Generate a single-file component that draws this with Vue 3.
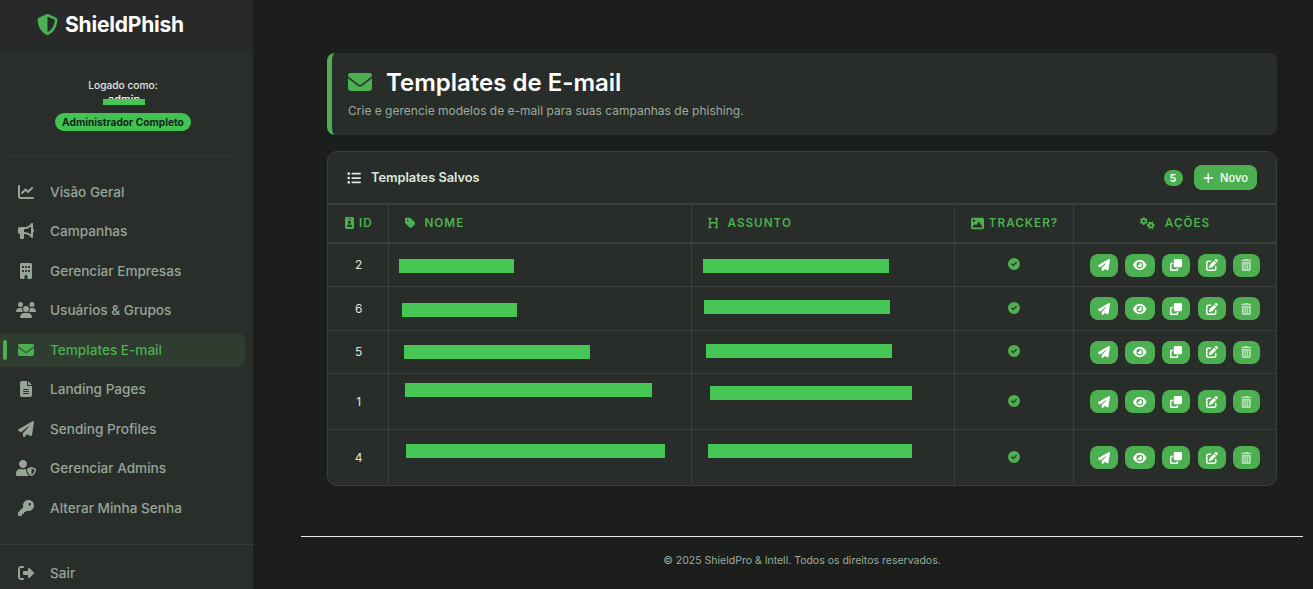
<script setup>
import { h } from 'vue'

const paths = {
  envelope: [512, 'M48 64C21.5 64 0 85.5 0 112c0 15.1 7.1 29.3 19.2 38.4L236.8 313.6c11.4 8.5 27 8.5 38.4 0L492.8 150.4c12.1-9.1 19.2-23.3 19.2-38.4c0-26.5-21.5-48-48-48H48zM0 176V384c0 35.3 28.7 64 64 64H448c35.3 0 64-28.7 64-64V176L294.4 339.2c-22.8 17.1-54 17.1-76.8 0L0 176z'],
  chart: [512, 'M64 64c0-17.7-14.3-32-32-32S0 46.3 0 64V400c0 44.2 35.8 80 80 80H480c17.7 0 32-14.3 32-32s-14.3-32-32-32H80c-8.8 0-16-7.2-16-16V64zm406.6 86.6c12.5-12.5 12.5-32.8 0-45.3s-32.8-12.5-45.3 0L320 210.7l-57.4-57.4c-12.5-12.5-32.8-12.5-45.3 0l-112 112c-12.5 12.5-12.5 32.8 0 45.3s32.8 12.5 45.3 0L240 221.3l57.4 57.4c12.5 12.5 32.8 12.5 45.3 0l128-128z'],
  bullhorn: [512, 'M480 32c0-12.9-7.8-24.6-19.8-29.6s-25.7-2.2-34.9 6.9L381.7 53c-48 48-113.1 75-181 75H192 160 64c-35.3 0-64 28.7-64 64v96c0 35.3 28.7 64 64 64l0 128c0 17.7 14.3 32 32 32h64c17.7 0 32-14.3 32-32V352l8.7 0c67.9 0 133 27 181 75l43.6 43.6c9.2 9.2 22.9 11.9 34.9 6.9s19.8-16.6 19.8-29.6V300.4c18.6-8.8 32-32.5 32-60.4s-13.4-51.6-32-60.4V32zm-64 76.7V240 371.3C357.2 317.8 280.5 288 200.7 288H192V192h8.7c79.8 0 156.5-29.8 215.3-83.3z'],
  building: [384, 'M48 0C21.5 0 0 21.5 0 48V464c0 26.5 21.5 48 48 48h96V432c0-26.5 21.5-48 48-48s48 21.5 48 48v80h96c26.5 0 48-21.5 48-48V48c0-26.5-21.5-48-48-48H48zM64 240c0-8.8 7.2-16 16-16h32c8.8 0 16 7.2 16 16v32c0 8.8-7.2 16-16 16H80c-8.8 0-16-7.2-16-16V240zm112-16h32c8.8 0 16 7.2 16 16v32c0 8.8-7.2 16-16 16H176c-8.8 0-16-7.2-16-16V240c0-8.8 7.2-16 16-16zm80 16c0-8.8 7.2-16 16-16h32c8.8 0 16 7.2 16 16v32c0 8.8-7.2 16-16 16H272c-8.8 0-16-7.2-16-16V240zM80 96h32c8.8 0 16 7.2 16 16v32c0 8.8-7.2 16-16 16H80c-8.8 0-16-7.2-16-16V112c0-8.8 7.2-16 16-16zm80 16c0-8.8 7.2-16 16-16h32c8.8 0 16 7.2 16 16v32c0 8.8-7.2 16-16 16H176c-8.8 0-16-7.2-16-16V112zM272 96h32c8.8 0 16 7.2 16 16v32c0 8.8-7.2 16-16 16H272c-8.8 0-16-7.2-16-16V112c0-8.8 7.2-16 16-16z'],
  users: [640, 'M144 0a80 80 0 1 1 0 160A80 80 0 1 1 144 0zM512 0a80 80 0 1 1 0 160A80 80 0 1 1 512 0zM0 298.7C0 239.8 47.8 192 106.7 192h42.7c15.9 0 31 3.5 44.6 9.7c-1.3 7.2-1.9 14.7-1.9 22.3c0 38.2 16.8 72.5 43.3 96c-.2 0-.4 0-.7 0H21.3C9.6 320 0 310.4 0 298.7zM405.3 320c-.2 0-.4 0-.7 0c26.6-23.5 43.3-57.8 43.3-96c0-7.6-.7-15-1.9-22.3c13.6-6.3 28.7-9.7 44.6-9.7h42.7C592.2 192 640 239.8 640 298.7c0 11.8-9.6 21.3-21.3 21.3H405.3zM224 224a96 96 0 1 1 192 0 96 96 0 1 1 -192 0zM128 485.3C128 411.7 187.7 352 261.3 352H378.7C452.3 352 512 411.7 512 485.3c0 14.7-11.9 26.7-26.7 26.7H154.7c-14.7 0-26.7-11.9-26.7-26.7z'],
  file: [384, 'M64 0C28.7 0 0 28.7 0 64V448c0 35.3 28.7 64 64 64H320c35.3 0 64-28.7 64-64V160H256c-17.7 0-32-14.3-32-32V0H64zM256 0V128H384L256 0zM112 256H272c8.8 0 16 7.2 16 16s-7.2 16-16 16H112c-8.8 0-16-7.2-16-16s7.2-16 16-16zm0 64H272c8.8 0 16 7.2 16 16s-7.2 16-16 16H112c-8.8 0-16-7.2-16-16s7.2-16 16-16zm0 64H272c8.8 0 16 7.2 16 16s-7.2 16-16 16H112c-8.8 0-16-7.2-16-16s7.2-16 16-16z'],
  plane: [512, 'M498.1 5.6c10.1 7 15.4 19.1 13.5 31.2l-64 416c-1.5 9.7-7.4 18.2-16 23s-18.9 5.4-28 1.6L284 427.7l-68.5 74.1c-8.9 9.7-22.9 12.9-35.2 8.1S160 493.2 160 480V396.4c0-4 1.5-7.8 4.2-10.7L331.8 202.8c5.8-6.3 5.6-16-.4-22s-15.7-6.4-22-.7L106 360.8 17.7 316.6C7.1 311.3 .3 300.7 0 288.9s5.9-22.8 16.1-28.7l448-256c10.7-6.1 23.9-5.5 34 1.4z'],
  usershield: [640, 'M622.3 271.1l-115.2-45c-4.1-1.6-12.6-3.7-22.2 0l-115.2 45c-10.7 4.2-17.7 14-17.7 24.9 0 111.6 68.7 188.8 132.9 213.9 9.6 3.7 18 1.6 22.2 0C558.4 489.9 640 420.5 640 296c0-10.9-7-20.7-17.7-24.9zM496 462.4V273.3l95.5 37.3c-5.6 87.1-60.9 135.4-95.5 151.8zM224 256c70.7 0 128-57.3 128-128S294.7 0 224 0 96 57.3 96 128s57.3 128 128 128zm96 40c0-2.5.8-4.8 1.1-7.2-2.5-.1-4.9-.8-7.5-.8h-16.7c-22.2 10.2-46.9 16-72.9 16s-50.6-5.8-72.9-16h-16.7C60.2 288 0 348.2 0 422.4V464c0 26.5 21.5 48 48 48h352c6.8 0 13.3-1.5 19.2-4-54-42.9-99.2-116.7-99.2-212z'],
  key: [512, 'M336 352c97.2 0 176-78.8 176-176S433.2 0 336 0S160 78.8 160 176c0 18.7 2.9 36.8 8.3 53.7L7 391c-4.5 4.5-7 10.6-7 17v80c0 13.3 10.7 24 24 24h80c13.3 0 24-10.7 24-24V448h40c13.3 0 24-10.7 24-24V384h40c6.4 0 12.5-2.5 17-7l33.3-33.3c16.9 5.4 35 8.3 53.7 8.3zM376 96a40 40 0 1 1 0 80 40 40 0 1 1 0-80z'],
  signout: [512, 'M377.9 105.9L500.7 228.7c7.2 7.2 11.3 17.1 11.3 27.3s-4.1 20.1-11.3 27.3L377.9 406.1c-6.4 6.4-15 9.9-24 9.9c-18.7 0-33.9-15.2-33.9-33.9l0-62.1-128 0c-17.7 0-32-14.3-32-32l0-64c0-17.7 14.3-32 32-32l128 0 0-62.1c0-18.7 15.2-33.9 33.9-33.9c9 0 17.6 3.6 24 9.9zM160 96L96 96c-17.7 0-32 14.3-32 32l0 256c0 17.7 14.3 32 32 32l64 0c17.7 0 32 14.3 32 32s-14.3 32-32 32l-64 0c-53 0-96-43-96-96L0 128C0 75 43 32 96 32l64 0c17.7 0 32 14.3 32 32s-14.3 32-32 32z'],
  shield: [512, 'M256 0c4.6 0 9.2 1 13.4 2.9L457.7 82.8c22 9.3 38.4 31 38.3 57.2c-.5 99.2-41.3 280.7-213.6 363.2c-16.7 8-36.1 8-52.8 0C57.3 420.7 16.5 239.2 16 140c-.1-26.2 16.3-47.9 38.3-57.2L242.7 2.9C246.8 1 251.4 0 256 0zm0 66.8V444.8C394 378 431.1 230.1 432 141.4L256 66.8l0 0z'],
  list: [512, 'M64 144a48 48 0 1 0 0-96 48 48 0 1 0 0 96zM192 64c-17.7 0-32 14.3-32 32s14.3 32 32 32H480c17.7 0 32-14.3 32-32s-14.3-32-32-32H192zm0 160c-17.7 0-32 14.3-32 32s14.3 32 32 32H480c17.7 0 32-14.3 32-32s-14.3-32-32-32H192zm0 160c-17.7 0-32 14.3-32 32s14.3 32 32 32H480c17.7 0 32-14.3 32-32s-14.3-32-32-32H192zM64 464a48 48 0 1 0 0-96 48 48 0 1 0 0 96zm48-208a48 48 0 1 0 -96 0 48 48 0 1 0 96 0z'],
  plus: [448, 'M256 80c0-17.7-14.3-32-32-32s-32 14.3-32 32V224H48c-17.7 0-32 14.3-32 32s14.3 32 32 32H192V432c0 17.7 14.3 32 32 32s32-14.3 32-32V288H400c17.7 0 32-14.3 32-32s-14.3-32-32-32H256V80z'],
  idbadge: [384, 'M64 0C28.7 0 0 28.7 0 64V448c0 35.3 28.7 64 64 64H320c35.3 0 64-28.7 64-64V64c0-35.3-28.7-64-64-64H64zm96 320h64c44.2 0 80 35.8 80 80c0 8.8-7.2 16-16 16H96c-8.8 0-16-7.2-16-16c0-44.2 35.8-80 80-80zm-32-96a64 64 0 1 1 128 0 64 64 0 1 1 -128 0zM144 64h96c8.8 0 16 7.2 16 16s-7.2 16-16 16H144c-8.8 0-16-7.2-16-16s7.2-16 16-16z'],
  tag: [448, 'M0 80V229.5c0 17 6.7 33.3 18.7 45.3l176 176c25 25 65.5 25 90.5 0L418.7 317.3c25-25 25-65.5 0-90.5l-176-176c-12-12-28.3-18.7-45.3-18.7H48C21.5 32 0 53.5 0 80zm112 32a32 32 0 1 1 0 64 32 32 0 1 1 0-64z'],
  heading: [448, 'M0 64C0 46.3 14.3 32 32 32H80h48c17.7 0 32 14.3 32 32s-14.3 32-32 32H112V208H336V96H320c-17.7 0-32-14.3-32-32s14.3-32 32-32h48 48c17.7 0 32 14.3 32 32s-14.3 32-32 32H400V240 416h16c17.7 0 32 14.3 32 32s-14.3 32-32 32H368 320c-17.7 0-32-14.3-32-32s14.3-32 32-32h16V272H112V416h16c17.7 0 32 14.3 32 32s-14.3 32-32 32H80 32c-17.7 0-32-14.3-32-32s14.3-32 32-32H48V240 96H32C14.3 96 0 81.7 0 64z'],
  image: [512, 'M0 96C0 60.7 28.7 32 64 32H448c35.3 0 64 28.7 64 64V416c0 35.3-28.7 64-64 64H64c-35.3 0-64-28.7-64-64V96zM323.8 202.5c-4.5-6.6-11.9-10.5-19.8-10.5s-15.4 3.9-19.8 10.5l-87 127.6L170.7 297c-4.6-5.7-11.5-9-18.7-9s-14.2 3.3-18.7 9l-64 80c-5.8 7.2-6.9 17.1-2.9 25.4s12.4 13.6 21.6 13.6h96 32H424c8.9 0 17.1-4.9 21.2-12.8s3.6-17.4-1.4-24.7l-120-176zM112 192a48 48 0 1 0 0-96 48 48 0 1 0 0 96z'],
  check: [512, 'M256 512A256 256 0 1 0 256 0a256 256 0 1 0 0 512zM369 209L241 337c-9.4 9.4-24.6 9.4-33.9 0l-64-64c-9.4-9.4-9.4-24.6 0-33.9s24.6-9.4 33.9 0l47 47L335 175c9.4-9.4 24.6-9.4 33.9 0s9.4 24.6 0 33.9z'],
  eye: [576, 'M288 32c-80.8 0-145.5 36.8-192.6 80.6C48.6 156 17.3 208 2.5 243.7c-3.3 7.9-3.3 16.7 0 24.6C17.3 304 48.6 356 95.4 399.4C142.5 443.2 207.2 480 288 480s145.5-36.8 192.6-80.6c46.8-43.5 78.1-95.4 93-131.1c3.3-7.9 3.3-16.7 0-24.6c-14.9-35.7-46.2-87.7-93-131.1C433.5 68.8 368.8 32 288 32zM144 256a144 144 0 1 1 288 0 144 144 0 1 1 -288 0zm144-64c0 35.3-28.7 64-64 64c-7.1 0-13.9-1.2-20.3-3.3c-5.5-1.8-11.9 1.6-11.7 7.4c.3 6.9 1.3 13.8 3.2 20.7c13.7 51.2 66.4 81.6 117.6 67.9s81.6-66.4 67.9-117.6c-11.1-41.5-47.8-69.4-88.6-71.1c-5.8-.2-9.2 6.1-7.4 11.7c2.1 6.4 3.3 13.2 3.3 20.3z'],
  clone: [512, 'M288 448H64V224h64V160H64c-35.3 0-64 28.7-64 64V448c0 35.3 28.7 64 64 64H288c35.3 0 64-28.7 64-64V384H288v64zm-64-96H448c35.3 0 64-28.7 64-64V64c0-35.3-28.7-64-64-64H224c-35.3 0-64 28.7-64 64V288c0 35.3 28.7 64 64 64z'],
  edit: [512, 'M471.6 21.7c-21.9-21.9-57.3-21.9-79.2 0L362.3 51.7l97.9 97.9 30.1-30.1c21.9-21.9 21.9-57.3 0-79.2L471.6 21.7zm-299.2 220c-6.1 6.1-10.8 13.6-13.5 21.9l-29.6 88.8c-2.9 8.6-.6 18.1 5.8 24.6s15.9 8.7 24.6 5.8l88.8-29.6c8.2-2.7 15.7-7.4 21.9-13.5L437.7 172.3 339.7 74.3 172.4 241.7zM96 64C43 64 0 107 0 160V416c0 53 43 96 96 96H352c53 0 96-43 96-96V320c0-17.7-14.3-32-32-32s-32 14.3-32 32v96c0 17.7-14.3 32-32 32H96c-17.7 0-32-14.3-32-32V160c0-17.7 14.3-32 32-32h96c17.7 0 32-14.3 32-32s-14.3-32-32-32H96z'],
  trash: [448, 'M135.2 17.7C140.6 6.8 151.7 0 163.8 0H284.2c12.1 0 23.2 6.8 28.6 17.7L320 32h96c17.7 0 32 14.3 32 32s-14.3 32-32 32H32C14.3 96 0 81.7 0 64S14.3 32 32 32h96l7.2-14.3zM32 128H416V448c0 35.3-28.7 64-64 64H96c-35.3 0-64-28.7-64-64V128zm96 64c-8.8 0-16 7.2-16 16V432c0 8.8 7.2 16 16 16s16-7.2 16-16V208c0-8.8-7.2-16-16-16zm96 0c-8.8 0-16 7.2-16 16V432c0 8.8 7.2 16 16 16s16-7.2 16-16V208c0-8.8-7.2-16-16-16zm96 0c-8.8 0-16 7.2-16 16V432c0 8.8 7.2 16 16 16s16-7.2 16-16V208c0-8.8-7.2-16-16-16z'],
  gears: [640, 'M308.5 135.3c7.1-6.3 9.9-16.2 6.2-25c-2.3-5.3-4.8-10.5-7.6-15.5L304 89.4c-3-5-6.3-9.9-9.8-14.6c-5.7-7.6-15.7-10.1-24.7-7.1l-28.2 9.3c-10.7-8.8-23-16-36.2-20.9L199 27.1c-1.9-9.3-9.1-16.7-18.5-17.8C173.9 8.4 167.2 8 160.4 8h-.7c-6.8 0-13.5 .4-20.1 1.2c-9.4 1.1-16.6 8.6-18.5 17.8L115 56.1c-13.3 5-25.5 12.1-36.2 20.9L50.5 67.8c-9-3-19-.5-24.7 7.1c-3.5 4.7-6.8 9.6-9.9 14.6l-3 5.3c-2.8 5-5.3 10.2-7.6 15.6c-3.7 8.7-.9 18.6 6.2 25l22.2 19.8C32.6 161.9 32 168.9 32 176s.6 14.1 1.7 20.9L11.5 216.7c-7.1 6.3-9.9 16.2-6.2 25c2.3 5.3 4.8 10.5 7.6 15.6l3 5.2c3 5.1 6.3 9.9 9.9 14.6c5.7 7.6 15.7 10.1 24.7 7.1l28.2-9.3c10.7 8.8 23 16 36.2 20.9l6.1 29.1c1.9 9.3 9.1 16.7 18.5 17.8c6.7 .8 13.5 1.2 20.4 1.2s13.7-.4 20.4-1.2c9.4-1.1 16.6-8.6 18.5-17.8l6.1-29.1c13.3-5 25.5-12.1 36.2-20.9l28.2 9.3c9 3 19 .5 24.7-7.1c3.5-4.7 6.8-9.5 9.8-14.6l3.1-5.4c2.8-5 5.3-10.2 7.6-15.5c3.7-8.7 .9-18.6-6.2-25l-22.2-19.8c1.1-6.8 1.7-13.8 1.7-20.9s-.6-14.1-1.7-20.9l22.2-19.8zM112 176a48 48 0 1 1 96 0 48 48 0 1 1 -96 0zM504.7 500.5c6.3 7.1 16.2 9.9 25 6.2c5.3-2.3 10.5-4.8 15.5-7.6l5.4-3.1c5-3 9.9-6.3 14.6-9.8c7.6-5.7 10.1-15.7 7.1-24.7l-9.3-28.2c8.8-10.7 16-23 20.9-36.2l29.1-6.1c9.3-1.9 16.7-9.1 17.8-18.5c.8-6.7 1.2-13.5 1.2-20.4s-.4-13.7-1.2-20.4c-1.1-9.4-8.6-16.6-17.8-18.5L583.9 307c-5-13.3-12.1-25.5-20.9-36.2l9.3-28.2c3-9 .5-19-7.1-24.7c-4.7-3.5-9.6-6.8-14.6-9.9l-5.3-3c-5-2.8-10.2-5.3-15.6-7.6c-8.7-3.7-18.6-.9-25 6.2l-19.8 22.2c-6.8-1.1-13.8-1.7-20.9-1.7s-14.1 .6-20.9 1.7l-19.8-22.2c-6.3-7.1-16.2-9.9-25-6.2c-5.3 2.3-10.5 4.8-15.6 7.6l-5.2 3c-5.1 3-9.9 6.3-14.6 9.9c-7.6 5.7-10.1 15.7-7.1 24.7l9.3 28.2c-8.8 10.7-16 23-20.9 36.2L315.1 313c-9.3 1.9-16.7 9.1-17.8 18.5c-.8 6.7-1.2 13.5-1.2 20.4s.4 13.7 1.2 20.4c1.1 9.4 8.6 16.6 17.8 18.5l29.1 6.1c5 13.3 12.1 25.5 20.9 36.2l-9.3 28.2c-3 9-.5 19 7.1 24.7c4.7 3.5 9.5 6.8 14.6 9.8l5.4 3.1c5 2.8 10.2 5.3 15.5 7.6c8.7 3.7 18.6 .9 25-6.2l19.8-22.2c6.8 1.1 13.8 1.7 20.9 1.7s14.1-.6 20.9-1.7l19.8 22.2zM464 304a48 48 0 1 1 0 96 48 48 0 1 1 0-96z']
}

const Icon = (props) => {
  const [w, d] = paths[props.name]
  return h('svg', { viewBox: `0 0 ${w} 512`, width: (w / 512) * props.size, height: props.size, fill: 'currentColor', style: { flex: 'none', display: 'block' } }, h('path', { d }))
}
Icon.props = ['name', 'size']

const nav = [
  { icon: 'chart', label: 'Visão Geral' },
  { icon: 'bullhorn', label: 'Campanhas' },
  { icon: 'building', label: 'Gerenciar Empresas' },
  { icon: 'users', label: 'Usuários & Grupos' },
  { icon: 'envelope', label: 'Templates E-mail', active: true },
  { icon: 'file', label: 'Landing Pages' },
  { icon: 'plane', label: 'Sending Profiles' },
  { icon: 'usershield', label: 'Gerenciar Admins' },
  { icon: 'key', label: 'Alterar Minha Senha' }
]

const actions = ['plane', 'eye', 'clone', 'edit', 'trash']

const rows = [
  { id: 2, h: 43, name: { l: 10, t: 15, w: 115 }, subj: { l: 11, t: 15, w: 186 } },
  { id: 6, h: 44, name: { l: 13, t: 16, w: 115 }, subj: { l: 12, t: 13, w: 186 } },
  { id: 5, h: 43, name: { l: 15, t: 14, w: 186 }, subj: { l: 14, t: 13, w: 186 } },
  { id: 1, h: 56, name: { l: 16, t: 9, w: 247 }, subj: { l: 18, t: 12, w: 202 } },
  { id: 4, h: 56, name: { l: 17, t: 14, w: 259 }, subj: { l: 16, t: 14, w: 204 } }
]
const bar = (b) => ({ left: b.l + 'px', top: b.t + 'px', width: b.w + 'px' })
</script>

<template>
  <div class="app">
    <aside class="sidebar">
      <div class="brand">
        <Icon name="shield" :size="21" class="brand-icon" />
        <span>ShieldPhish</span>
      </div>
      <div class="user">
        <div class="user-label">Logado como:</div>
        <div class="user-name">admin<i class="user-bar"></i></div>
        <div class="pill">Administrador Completo</div>
      </div>
      <nav class="nav">
        <a v-for="n in nav" :key="n.label" class="nav-item" :class="{ active: n.active }">
          <span class="nav-icon"><Icon :name="n.icon" :size="16" /></span>
          <span>{{ n.label }}</span>
        </a>
      </nav>
      <div class="logout">
        <a class="nav-item">
          <span class="nav-icon"><Icon name="signout" :size="16" /></span>
          <span>Sair</span>
        </a>
      </div>
    </aside>

    <main class="main">
      <div class="content">
        <header class="page-head">
          <h1><Icon name="envelope" :size="24" class="head-icon" />Templates de E-mail</h1>
          <p>Crie e gerencie modelos de e-mail para suas campanhas de phishing.</p>
        </header>

        <section class="card">
          <div class="card-head">
            <div class="card-title"><Icon name="list" :size="14" class="title-icon" />Templates Salvos</div>
            <div class="card-tools">
              <span class="count">5</span>
              <button class="new-btn"><Icon name="plus" :size="12" />Novo</button>
            </div>
          </div>
          <table>
            <colgroup>
              <col class="c-id" />
              <col class="c-name" />
              <col class="c-subj" />
              <col class="c-track" />
              <col />
            </colgroup>
            <thead>
              <tr>
                <th class="center"><span class="th-in tight"><Icon name="idbadge" :size="12" />ID</span></th>
                <th><span class="th-in"><Icon name="tag" :size="12" />NOME</span></th>
                <th><span class="th-in"><Icon name="heading" :size="12" />ASSUNTO</span></th>
                <th class="center"><span class="th-in tight"><Icon name="image" :size="13" />TRACKER?</span></th>
                <th class="center last"><span class="th-in"><Icon name="gears" :size="12" />AÇÕES</span></th>
              </tr>
            </thead>
            <tbody>
              <tr v-for="r in rows" :key="r.id" :style="{ height: r.h + 'px' }">
                <td class="center id">{{ r.id }}</td>
                <td class="redact"><i class="bar" :style="bar(r.name)"></i></td>
                <td class="redact"><i class="bar" :style="bar(r.subj)"></i></td>
                <td><span class="check"><Icon name="check" :size="12" /></span></td>
                <td>
                  <div class="actions">
                    <button v-for="a in actions" :key="a" class="act" :class="a"><Icon :name="a" :size="12" /></button>
                  </div>
                </td>
              </tr>
            </tbody>
          </table>
        </section>
      </div>

      <footer class="footer">© 2025 ShieldPro &amp; Intell. Todos os direitos reservados.</footer>
    </main>
  </div>
</template>

<style>
html, body { margin: 0; background: #1c1e1c; overflow: hidden; }
</style>

<style scoped>
.app {
  display: flex;
  height: 589px;
  overflow: hidden;
  font-family: Inter, "Liberation Sans", sans-serif;
  background: #1c1e1c;
}
.sidebar {
  width: 253px;
  flex: none;
  display: flex;
  flex-direction: column;
  background: #2a2e2b;
  overflow: hidden;
}
.brand {
  height: 53px;
  flex: none;
  display: flex;
  align-items: center;
  gap: 7px;
  padding: 0 0 5px 37px;
  box-sizing: border-box;
  background: #272a28;
  color: #fff;
  font-size: 21px;
  font-weight: 700;
  letter-spacing: -0.2px;
}
.brand-icon { color: #4caf50; }
.user {
  height: 103px;
  flex: none;
  box-sizing: border-box;
  margin: 0 16px 0 9px;
  padding-top: 26px;
  border-bottom: 1px solid #333835;
  text-align: center;
  color: #e0e4e0;
}
.user-label { font-size: 10.2px; font-weight: 500; line-height: 13px; }
.user-name {
  position: relative;
  left: 1px;
  width: 42px;
  height: 14px;
  margin: 0 auto 4px;
  font-size: 11px;
  line-height: 15px;
  font-weight: 500;
  color: #fff;
}
.user-bar {
  position: absolute;
  left: 0;
  top: 7px;
  width: 42px;
  height: 6px;
  background: #45c655;
}
.pill {
  display: inline-block;
  height: 18px;
  line-height: 18px;
  padding: 0 7px;
  border-radius: 9px;
  background: #40c351;
  color: #12261a;
  font-size: 10.2px;
  font-weight: 700;
}
.nav { flex: 1; padding-top: 18.9px; }
.nav-item {
  position: relative;
  display: flex;
  align-items: center;
  height: 34px;
  margin: 0 8px 5.5px 0;
  color: #95a597;
  font-size: 13.6px;
  font-weight: 500;
  border-radius: 0 8px 8px 0;
}
.nav-item.active { background: #2f3d31; color: #4caf50; }
.nav-item.active::before {
  content: "";
  position: absolute;
  left: 3px;
  top: 7px;
  width: 4px;
  height: 20px;
  border-radius: 2px;
  background: #4caf50;
}
.nav-icon {
  width: 20px;
  margin: 0 14.5px 0 15.5px;
  display: flex;
  justify-content: center;
}
.logout {
  height: 45px;
  flex: none;
  box-sizing: border-box;
  padding-top: 11px;
  border-top: 1px solid #363b37;
}
.main {
  flex: 1;
  min-width: 0;
  padding: 53px 10px 0 48px;
}
.content { padding: 0 26px; }
.page-head {
  height: 82px;
  box-sizing: border-box;
  padding: 14px 16px 0;
  background: #292d2a;
  border-left: 5px solid #4caf50;
  border-radius: 8px;
}
.page-head h1 {
  margin: 0;
  display: flex;
  align-items: center;
  height: 30px;
  color: #fff;
  font-size: 24px;
  font-weight: 600;
}
.head-icon { color: #4caf50; margin-right: 14px; }
.page-head p {
  margin: 6px 0 0;
  font-size: 12px;
  line-height: 16px;
  color: #9bab9d;
}
.card {
  margin-top: 16px;
  background: #292d2a;
  border: 1px solid #3b403c;
  border-radius: 10px;
  overflow: hidden;
}
.card-head {
  height: 51px;
  box-sizing: border-box;
  display: flex;
  align-items: center;
  justify-content: space-between;
  padding: 0 19px;
}
.card-title {
  display: flex;
  align-items: center;
  color: #dfe8df;
  font-size: 12.8px;
  font-weight: 600;
}
.title-icon { margin-right: 10px; }
.card-tools { display: flex; align-items: center; gap: 11px; }
.count {
  width: 19px;
  height: 16px;
  line-height: 16px;
  text-align: center;
  border-radius: 8px;
  background: #4caf50;
  color: #fff;
  font-size: 10px;
  font-weight: 700;
}
.new-btn {
  display: flex;
  align-items: center;
  gap: 7px;
  height: 25px;
  padding: 0 9px;
  border: 0;
  border-radius: 8px;
  background: #4caf50;
  color: #fff;
  font-family: inherit;
  font-size: 11.2px;
  font-weight: 500;
}
table {
  width: 100%;
  border-collapse: collapse;
  table-layout: fixed;
}
.c-id { width: 60px; }
.c-name { width: 303px; }
.c-subj { width: 263px; }
.c-track { width: 119px; }
thead tr { height: 39px; }
th {
  padding: 0 0 1px 16px;
  text-align: left;
  color: #4caf50;
  font-size: 11.7px;
  font-weight: 600;
  letter-spacing: 1px;
  border-top: 2px solid #3b403c;
  border-bottom: 2px solid #3b403c;
  border-left: 1px solid #3b403c;
}
th:first-child, td:first-child { border-left: 0; }
th.center { padding: 0 0 1px 2px; text-align: center; }
th.center.last { padding-left: 1px; }
.th-in { display: inline-flex; align-items: center; gap: 9.5px; vertical-align: middle; }
.th-in.tight { gap: 5px; }
td {
  padding: 0;
  border-top: 1px solid #3b403c;
  border-left: 1px solid #3b403c;
  color: #dfe8df;
  font-size: 12px;
  font-weight: 400;
}
tbody tr:first-child td { border-top: 0; }
.center { text-align: center; }
td.id { padding-left: 2px; }
.redact { position: relative; }
.bar {
  position: absolute;
  display: block;
  height: 14px;
  background: #45c655;
}
.check { display: flex; justify-content: center; color: #4caf50; margin-top: -1px; padding-left: 1px; }
.actions {
  display: flex;
  justify-content: center;
  gap: 7.5px;
  padding-top: 1px;
}
.act {
  display: flex;
  align-items: center;
  justify-content: center;
  height: 23px;
  padding: 0 8px;
  border: 0;
  border-radius: 8px;
  background: #4caf50;
  color: #fff;
}
.act.trash { color: #b9dcba; }
.footer {
  margin-top: 50px;
  padding-top: 17px;
  border-top: 1px solid #e8e8e8;
  text-align: center;
  font-size: 10.5px;
  line-height: 14px;
  color: #9bab9d;
}
</style>
